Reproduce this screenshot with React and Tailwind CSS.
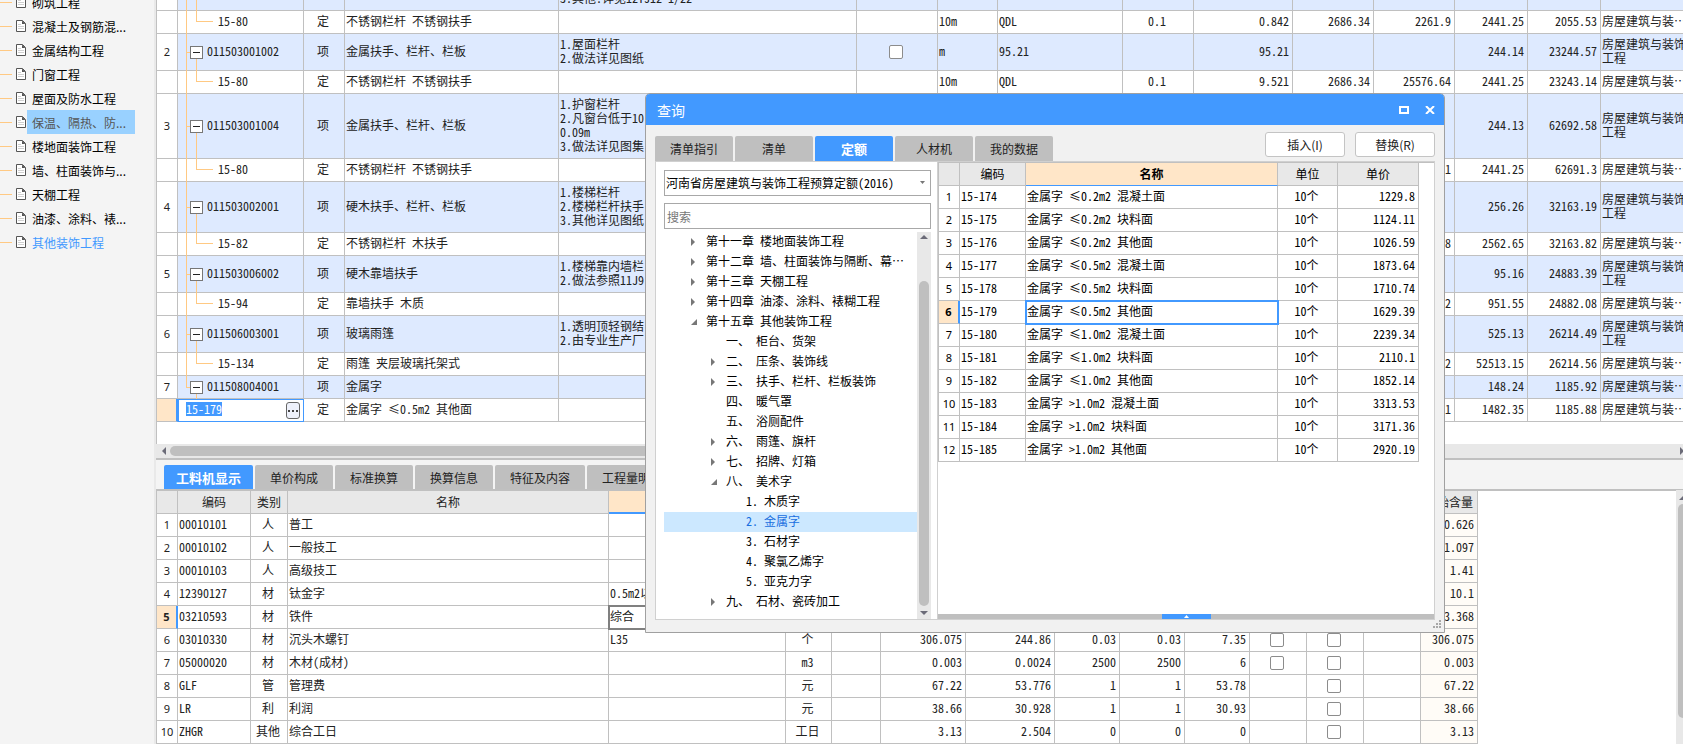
import { useEffect, useRef, useState } from 'react';

const SIDEBAR_ITEMS = [
  '砌筑工程',
  '混凝土及钢筋混...',
  '金属结构工程',
  '门窗工程',
  '屋面及防水工程',
  '保温、隔热、防...',
  '楼地面装饰工程',
  '墙、柱面装饰与...',
  '天棚工程',
  '油漆、涂料、裱...',
  '其他装饰工程',
];

const MAJOR = '房屋建筑与装饰工程';
const MAJOR_SHORT = '房屋建筑与装…';

const BILL_COLUMNS = [21, 126, 41, 214, 298, 81, 60, 125, 71, 99, 81, 81, 73, 73, 90];

const BILL_ROWS = [
  { child: true, code: '15-80', name: '不锈钢栏杆 不锈钢扶手', unit: '10m', expr: 'QDL', content: '0.1', qty: '0.842', base: '2686.34', baseTotal: '2261.9', price: '2441.25', total: '2055.53' },
  { no: '2', code: '011503001002', name: '金属扶手、栏杆、栏板', features: ['1.屋面栏杆', '2.做法详见图纸'], height: 'h-[37px]', check: true, unit: 'm', expr: '95.21', qty: '95.21', price: '244.14', total: '23244.57' },
  { child: true, code: '15-80', name: '不锈钢栏杆 不锈钢扶手', unit: '10m', expr: 'QDL', content: '0.1', qty: '9.521', base: '2686.34', baseTotal: '25576.64', price: '2441.25', total: '23243.14' },
  { no: '3', code: '011503001004', name: '金属扶手、栏杆、栏板', features: ['1.护窗栏杆', '2.凡窗台低于10', '0.09m', '3.做法详见图集'], height: 'h-[65px]', price: '244.13', total: '62692.58' },
  { child: true, code: '15-80', name: '不锈钢栏杆 不锈钢扶手', baseTotal: '1', price: '2441.25', total: '62691.3' },
  { no: '4', code: '011503002001', name: '硬木扶手、栏杆、栏板', features: ['1.楼梯栏杆', '2.楼梯栏杆扶手', '3.其他详见图纸'], height: 'h-[51px]', price: '256.26', total: '32163.19' },
  { child: true, code: '15-82', name: '不锈钢栏杆 木扶手', baseTotal: '8', price: '2562.65', total: '32163.82' },
  { no: '5', code: '011503006002', name: '硬木靠墙扶手', features: ['1.楼梯靠内墙栏', '2.做法参照11J9'], height: 'h-[37px]', price: '95.16', total: '24883.39' },
  { child: true, code: '15-94', name: '靠墙扶手 木质', baseTotal: '2', price: '951.55', total: '24882.08' },
  { no: '6', code: '011506003001', name: '玻璃雨篷', features: ['1.透明顶轻钢结', '2.由专业生产厂'], height: 'h-[37px]', price: '525.13', total: '26214.49' },
  { child: true, code: '15-134', name: '雨篷 夹层玻璃托架式', baseTotal: '2', price: '52513.15', total: '26214.56' },
  { no: '7', code: '011508004001', name: '金属字', last: true, price: '148.24', total: '1185.92' },
];

const DETAIL_TABS = ['工料机显示', '单价构成', '标准换算', '换算信息', '特征及内容', '工程量明细'];

const DETAIL_COLUMNS = [21, 73, 37, 321, 177, 46, 49, 85, 89, 65, 65, 65, 57, 57, 57, 57];

const DETAIL_ROWS = [
  { code: '00010101', type: '人', name: '普工', values: ['', '', '', '', ''], origin: '0.626' },
  { code: '00010102', type: '人', name: '一般技工', values: ['', '', '', '', ''], origin: '1.097' },
  { code: '00010103', type: '人', name: '高级技工', values: ['', '', '', '', ''], origin: '1.41' },
  { code: '12390127', type: '材', name: '钛金字', spec: '0.5m2以', values: ['', '', '', '', ''], origin: '10.1' },
  { code: '03210593', type: '材', name: '铁件', spec: '综合', values: ['', '', '', '', ''], origin: '3.368', active: true },
  { code: '03010330', type: '材', name: '沉头木螺钉', spec: 'L35', unit: '个', values: ['306.075', '244.86', '0.03', '0.03', '7.35'], temp: true, lock: true, origin: '306.075' },
  { code: '05000020', type: '材', name: '木材(成材)', unit: 'm3', values: ['0.003', '0.0024', '2500', '2500', '6'], temp: true, lock: true, origin: '0.003' },
  { code: 'GLF', type: '管', name: '管理费', unit: '元', values: ['67.22', '53.776', '1', '1', '53.78'], lock: true, origin: '67.22' },
  { code: 'LR', type: '利', name: '利润', unit: '元', values: ['38.66', '30.928', '1', '1', '30.93'], lock: true, origin: '38.66' },
  { code: 'ZHGR', type: '其他', name: '综合工日', unit: '工日', values: ['3.13', '2.504', '0', '0', '0'], lock: true, origin: '3.13' },
];

const QUERY_TABS = ['清单指引', '清单', '定额', '人材机', '我的数据'];

const CHAPTERS = [
  { level: 1, label: '第十一章 楼地面装饰工程', state: 'closed' },
  { level: 1, label: '第十二章 墙、柱面装饰与隔断、幕…', state: 'closed' },
  { level: 1, label: '第十三章 天棚工程', state: 'closed' },
  { level: 1, label: '第十四章 油漆、涂料、裱糊工程', state: 'closed' },
  { level: 1, label: '第十五章 其他装饰工程', state: 'open' },
  { level: 2, label: '一、 柜台、货架' },
  { level: 2, label: '二、 压条、装饰线', state: 'closed' },
  { level: 2, label: '三、 扶手、栏杆、栏板装饰', state: 'closed' },
  { level: 2, label: '四、 暖气罩' },
  { level: 2, label: '五、 浴厕配件' },
  { level: 2, label: '六、 雨篷、旗杆', state: 'closed' },
  { level: 2, label: '七、 招牌、灯箱', state: 'closed' },
  { level: 2, label: '八、 美术字', state: 'open' },
  { level: 3, label: '1. 木质字' },
  { level: 3, label: '2. 金属字' },
  { level: 3, label: '3. 石材字' },
  { level: 3, label: '4. 聚氯乙烯字' },
  { level: 3, label: '5. 亚克力字' },
  { level: 2, label: '九、 石材、瓷砖加工', state: 'closed' },
];

const LEVEL_INDENT = { 1: 'pl-[26px]', 2: 'pl-[46px]', 3: 'pl-[66px]' };

const QUOTA_COLUMNS = [21, 66, 252, 60, 81];

const QUOTAS = [
  ['15-174', '金属字 ≤0.2m2 混凝土面', '1229.8'],
  ['15-175', '金属字 ≤0.2m2 块料面', '1124.11'],
  ['15-176', '金属字 ≤0.2m2 其他面', '1026.59'],
  ['15-177', '金属字 ≤0.5m2 混凝土面', '1873.64'],
  ['15-178', '金属字 ≤0.5m2 块料面', '1710.74'],
  ['15-179', '金属字 ≤0.5m2 其他面', '1629.39'],
  ['15-180', '金属字 ≤1.0m2 混凝土面', '2239.34'],
  ['15-181', '金属字 ≤1.0m2 块料面', '2110.1'],
  ['15-182', '金属字 ≤1.0m2 其他面', '1852.14'],
  ['15-183', '金属字 >1.0m2 混凝土面', '3313.53'],
  ['15-184', '金属字 >1.0m2 块料面', '3171.36'],
  ['15-185', '金属字 >1.0m2 其他面', '2920.19'],
];

function Columns({ widths }) {
  return (
    <colgroup>
      {widths.map((w, i) => (
        <col key={i} style={{ width: w }} />
      ))}
    </colgroup>
  );
}

function Cell({ className = 'pb-0.5', children }) {
  return (
    <td className={`overflow-hidden border-r border-b border-[#c0c0c0] pr-[3px] pl-px whitespace-nowrap ${className}`}>
      {children}
    </td>
  );
}

function HeadCell({ className = 'border-b-[#c0c0c0] bg-[#e8e8e8] font-normal', children }) {
  return (
    <th className={`h-[23px] border-r border-b border-r-[#c0c0c0] p-0 whitespace-nowrap ${className}`}>
      {children}
    </th>
  );
}

function IndexCell({ active, children }) {
  return (
    <td
      className={`border-b border-b-[#c0c0c0] p-0 text-center font-['Noto_Sans',sans-serif] text-[11px] ${
        active ? 'border-r-2 border-r-[#4299ff] bg-[#ffe6c8] font-bold' : 'border-r border-r-[#c0c0c0]'
      }`}
    >
      {children}
    </td>
  );
}

function CheckBox({ label }) {
  return (
    <input
      type="checkbox"
      aria-label={label}
      className="mx-auto block size-3.5 appearance-none rounded-xs border border-[#8c8c8c] bg-white checked:bg-[#4299ff]"
    />
  );
}

function Triangle({ dir, className = '' }) {
  const paths = {
    up: 'M0 6 L4 2 L8 6 Z',
    down: 'M0 2 L4 6 L8 2 Z',
    left: 'M6 0 L2 4 L6 8 Z',
    right: 'M1 0 L5 4 L1 8 Z',
    corner: 'M7 1 L7 7 L1 7 Z',
  };
  return (
    <svg viewBox="0 0 8 8" className={`size-2 shrink-0 ${className}`} fill="currentColor" aria-hidden="true">
      <path d={paths[dir]} />
    </svg>
  );
}

function DocIcon() {
  return (
    <svg width="10" height="12" viewBox="0 0 10 12" fill="none" className="shrink-0" aria-hidden="true">
      <path d="M0.5 0.5H6.5L9.5 3.5V11.5H0.5Z" fill="#fff" stroke="#555" />
      <path d="M6 0.5L9.5 4H6Z" fill="#555" />
      <path d="M2 4.5H5M2 6.5H8M2 8.5H8" stroke="#d0d0d0" />
    </svg>
  );
}

function Sidebar() {
  return (
    <nav className="w-[156px] shrink-0 overflow-hidden border-r-2 border-[#e9e9e9] bg-[#f4f4f4] font-['Noto_Sans_CJK_SC',sans-serif]">
      <ul className="-mt-2.5">
        {SIDEBAR_ITEMS.map((item, i) => (
          <li key={item} className="flex h-6 items-center">
            <span className="mr-1 h-px w-3 bg-[#ffc983]" />
            <DocIcon />
            <a
              href="#"
              className={`ml-px h-6 pt-0.5 pl-[5px] leading-[22px] ${i === 5 ? 'w-[108px] bg-[#99d1ff] text-[#555]' : ''} ${
                i === 10 ? 'text-[#4299ff]' : ''
              }`}
            >
              {item}
            </a>
          </li>
        ))}
      </ul>
    </nav>
  );
}

// Code column of the bill table, with the tree lines drawn over the cell
function CodeCell({ row }) {
  return (
    <td className="relative border-r border-b border-[#c0c0c0] p-0">
      <span className={`absolute top-0 left-2 w-px bg-[#ffc983] ${row.last ? 'h-1/2' : '-bottom-px'}`} />
      {row.child ? (
        <>
          <span className="absolute top-0 left-[18px] h-1/2 w-[17px] border-b border-l border-[#ffc983]" />
          <div className="pb-0.5 pl-10">{row.code}</div>
        </>
      ) : (
        <>
          <span className="absolute top-1/2 left-2 h-px w-1 bg-[#ffc983]" />
          <span className="absolute top-1/2 left-[18px] -bottom-px w-px bg-[#ffc983]" />
          <div className="relative flex items-center gap-1 pl-3">
            <button
              type="button"
              aria-label="折叠"
              className="flex size-[13px] items-center justify-center border border-[#777] bg-white"
            >
              <span className="h-px w-[7px] bg-[#222]" />
            </button>
            <span className="pb-0.5">{row.code}</span>
          </div>
        </>
      )}
    </td>
  );
}

function EditCell() {
  const inputRef = useRef(null);

  useEffect(() => {
    inputRef.current.focus();
    inputRef.current.select();
  }, []);

  return (
    <td className="border border-[#4299ff] p-0">
      <div className="flex items-center pr-[3px] pl-[7px]">
        <input
          ref={inputRef}
          aria-label="编码"
          defaultValue="15-179"
          className="mb-1 h-3.5 min-w-0 flex-1 text-[12px] leading-[14px] outline-none selection:bg-[#4299ff] selection:text-white"
        />
        <button
          type="button"
          aria-label="选择"
          className="flex h-[17px] w-3.5 items-center justify-center gap-0.5 rounded-[3px] border border-[#666] bg-[#eef1fb]"
        >
          <span className="size-0.5 bg-[#444]" />
          <span className="size-0.5 bg-[#444]" />
          <span className="size-0.5 bg-[#444]" />
        </button>
      </div>
    </td>
  );
}

function BillRow({ row }) {
  return (
    <tr className={`${row.height || 'h-[23px]'} ${row.child ? '' : 'bg-[#deeaff]'}`}>
      <td className="border-r border-b border-[#c0c0c0] bg-white p-0 text-center font-['Noto_Sans',sans-serif] text-[11px]">
        {row.no}
      </td>
      <CodeCell row={row} />
      <Cell className="pb-0.5 text-center">{row.child ? '定' : '项'}</Cell>
      <Cell>{row.name}</Cell>
      <Cell>
        {row.features?.map((line) => (
          <div key={line}>{line}</div>
        ))}
      </Cell>
      <Cell className="pb-0">{row.check && <CheckBox label="主要清单" />}</Cell>
      <Cell>{row.unit}</Cell>
      <Cell>{row.expr}</Cell>
      <Cell className="pb-0.5 text-center">{row.content}</Cell>
      <Cell className="pb-0.5 text-right">{row.qty}</Cell>
      <Cell className="pb-0.5 text-right">{row.base}</Cell>
      <Cell className="pb-0.5 text-right">{row.baseTotal}</Cell>
      <Cell className="pb-0.5 text-right">{row.price}</Cell>
      <Cell className="pb-0.5 text-right">{row.total}</Cell>
      <Cell>{row.features ? <div className="w-[84px] whitespace-normal">{MAJOR}</div> : MAJOR_SHORT}</Cell>
    </tr>
  );
}

function BillTable() {
  return (
    <div className="overflow-hidden border-l border-[#c0c0c0] bg-white pb-[22px]">
      <table className="w-[1534px] table-fixed border-separate border-spacing-0 text-[#222]">
        <Columns widths={BILL_COLUMNS} />
        <tbody>
          <tr className="bg-[#deeaff]">
            <td className="h-[11px] border-r border-b border-[#c0c0c0] bg-white p-0" />
            <td className="relative border-r border-b border-[#c0c0c0] p-0">
              <span className="absolute top-0 -bottom-px left-2 w-px bg-[#ffc983]" />
              <span className="absolute top-0 -bottom-px left-[18px] w-px bg-[#ffc983]" />
            </td>
            <Cell className="py-0" />
            <Cell className="py-0" />
            <Cell className="py-0">
              <div className="flex h-2.5 items-end overflow-hidden pb-[5px]">3.其他:详见12YJ12 1/22</div>
            </Cell>
            {BILL_COLUMNS.slice(5).map((_, i) => (
              <Cell key={i} className="py-0" />
            ))}
          </tr>
          {BILL_ROWS.map((row, i) => (
            <BillRow key={i} row={row} />
          ))}
          <tr className="h-[23px]">
            <td className="border-r-2 border-b border-r-[#4299ff] border-b-[#c0c0c0] bg-[#ffe6c8]" />
            <EditCell />
            <Cell className="pb-0.5 text-center">定</Cell>
            <Cell>金属字 ≤0.5m2 其他面</Cell>
            <Cell />
            <Cell />
            <Cell />
            <Cell />
            <Cell />
            <Cell />
            <Cell />
            <Cell className="pb-0.5 text-right">1</Cell>
            <Cell className="pb-0.5 text-right">1482.35</Cell>
            <Cell className="pb-0.5 text-right">1185.88</Cell>
            <Cell>{MAJOR_SHORT}</Cell>
          </tr>
        </tbody>
      </table>
    </div>
  );
}

function DetailTable() {
  return (
    <div className="border-t border-l border-[#c0c0c0]">
      <table className="w-[1321px] table-fixed border-separate border-spacing-0 text-[#222]">
        <Columns widths={DETAIL_COLUMNS} />
        <thead>
          <tr>
            <HeadCell />
            <HeadCell>编码</HeadCell>
            <HeadCell>类别</HeadCell>
            <HeadCell>名称</HeadCell>
            <HeadCell className="border-b-[#4299ff] bg-[#ffe6c8] shadow-[inset_0_-1px_0_#4299ff]" />
            {DETAIL_COLUMNS.slice(6).map((_, i) => (
              <HeadCell key={i} />
            ))}
            <HeadCell>原始含量</HeadCell>
          </tr>
        </thead>
        <tbody>
          {DETAIL_ROWS.map((row, i) => (
            <tr key={row.code} className="h-[23px]">
              <IndexCell active={row.active}>{i + 1}</IndexCell>
              <Cell>{row.code}</Cell>
              <Cell className="pb-0.5 text-center">{row.type}</Cell>
              <Cell>{row.name}</Cell>
              <Cell className={row.active ? 'pb-0.5 outline-2 -outline-offset-1 outline-[#808080]' : 'pb-0.5'}>
                {row.spec}
              </Cell>
              <Cell className="pb-0.5 text-center">{row.unit}</Cell>
              <Cell />
              {row.values.map((value, j) => (
                <Cell key={j} className="pb-0.5 text-right">{value}</Cell>
              ))}
              <Cell className="pb-0">{row.temp && <CheckBox label="是否暂估" />}</Cell>
              <Cell className="pb-0">{row.lock && <CheckBox label="锁定数量" />}</Cell>
              <Cell />
              <Cell className="bg-[#fffcf7] pb-0.5 text-right">{row.origin}</Cell>
            </tr>
          ))}
        </tbody>
      </table>
    </div>
  );
}

function DetailPane() {
  const [tab, setTab] = useState(0);

  return (
    <section className="flex min-h-0 flex-1 flex-col border-t-2 border-[#c0c0c0] bg-[#f4f4f4]">
      <div className="flex shrink-0 gap-0.5 overflow-hidden pt-[5px] pl-2">
        {DETAIL_TABS.map((label, i) => (
          <button
            key={label}
            type="button"
            onClick={() => setTab(i)}
            className={`h-6 shrink-0 rounded-t-xs pt-0.5 ${
              i === tab
                ? 'bg-[#4299ff] px-3 text-[13px] font-bold text-white'
                : 'bg-[#bfbfbf] px-[15px] text-[#222]'
            }`}
          >
            {label}
          </button>
        ))}
      </div>
      <div className="flex min-h-0 flex-1 border-t border-[#c0c0c0] bg-white">
        <div className="min-w-0 flex-1 overflow-hidden">
          <DetailTable />
        </div>
        <div className="flex w-[7px] shrink-0 flex-col overflow-hidden bg-[#e8e8e8] pl-0.5">
          <Triangle dir="up" className="mt-1 ml-px text-[#6b6b78]" />
          <span className="mt-0.5 h-[214px] w-2.5 rounded-full bg-[#bfbfbf]" />
        </div>
      </div>
    </section>
  );
}

function ChapterTree() {
  const [selected, setSelected] = useState(14);

  return (
    <div className="mt-[3px] flex min-h-0 flex-1">
      <ul className="min-w-0 flex-1 overflow-hidden">
        {CHAPTERS.map((node, i) => (
          <li key={node.label}>
            <button
              type="button"
              onClick={() => setSelected(i)}
              className={`flex h-5 w-full items-center gap-2 text-left whitespace-nowrap ${LEVEL_INDENT[node.level]} ${
                i === selected ? 'bg-[#cce8ff] text-[#1a6fe0]' : 'text-black'
              }`}
            >
              <span className="w-2 shrink-0">
                {node.state && (
                  <Triangle dir={node.state === 'open' ? 'corner' : 'right'} className="text-[#777]" />
                )}
              </span>
              <span className="pb-0.5">{node.label}</span>
            </button>
          </li>
        ))}
      </ul>
      <div className="flex w-3.5 shrink-0 flex-col items-center bg-[#e8e8e8] pb-0.5">
        <Triangle dir="up" className="mt-px text-[#6b6b78]" />
        <span className="mt-10 mb-[3px] w-2.5 flex-1 rounded-full bg-[#bfbfbf]" />
        <Triangle dir="down" className="text-[#6b6b78]" />
      </div>
    </div>
  );
}

function QuotaTable() {
  return (
    <div className="border-t border-l border-[#c0c0c0]">
      <table className="w-[480px] table-fixed border-separate border-spacing-0 text-black">
        <Columns widths={QUOTA_COLUMNS} />
        <thead>
          <tr>
            <HeadCell />
            <HeadCell>编码</HeadCell>
            <HeadCell className="border-b-[#4299ff] bg-[#ffe6c8] font-bold">名称</HeadCell>
            <HeadCell>单位</HeadCell>
            <HeadCell>单价</HeadCell>
          </tr>
        </thead>
        <tbody>
          {QUOTAS.map(([code, name, price], i) => (
            <tr key={code} className="h-[23px]">
              <IndexCell active={i === 5}>{i + 1}</IndexCell>
              <Cell className="pb-0.5">{code}</Cell>
              <Cell className={i === 5 ? 'pb-0.5 outline-2 -outline-offset-1 outline-[#4299ff]' : 'pb-0.5'}>
                {name}
              </Cell>
              <Cell className="pb-0.5 text-center">10个</Cell>
              <Cell className="pb-0.5 text-right">{price}</Cell>
            </tr>
          ))}
        </tbody>
      </table>
    </div>
  );
}

function QueryDialog() {
  const [tab, setTab] = useState(2);

  return (
    <div
      role="dialog"
      aria-label="查询"
      className="absolute top-[93px] left-[645px] flex h-[540px] w-[800px] flex-col overflow-hidden rounded-t-[5px] border border-[#a0a0a0] bg-[#f1f1f1]"
    >
      <div className="flex h-[31px] shrink-0 items-center justify-between bg-[#4299ff] pr-[9px] pl-[11px] text-white">
        <h2 className="font-['Noto_Sans_CJK_SC',sans-serif] text-[14px]">查询</h2>
        <div className="flex items-center gap-4">
          <button type="button" aria-label="最大化">
            <svg width="10" height="8" viewBox="0 0 10 8" fill="none" stroke="currentColor" strokeWidth="2">
              <rect x="1" y="1" width="8" height="6" />
            </svg>
          </button>
          <button type="button" aria-label="关闭">
            <svg width="10" height="8" viewBox="0 0 10 8" fill="none" stroke="currentColor" strokeWidth="2">
              <path d="M1 0L9 8M9 0L1 8" />
            </svg>
          </button>
        </div>
      </div>

      <div className="flex shrink-0 items-end justify-between px-[9px] pt-[7px]">
        <div className="flex gap-0.5">
          {QUERY_TABS.map((label, i) => (
            <button
              key={label}
              type="button"
              onClick={() => setTab(i)}
              className={`h-[25px] w-[78px] rounded-t-xs ${
                i === tab ? 'bg-[#4299ff] text-[13px] font-bold text-white' : 'bg-[#bfbfbf] text-[#222]'
              }`}
            >
              {label}
            </button>
          ))}
        </div>
        <div className="mb-1 flex gap-2.5 font-['Noto_Sans_CJK_SC',sans-serif] text-[#222]">
          <button type="button" className="h-[25px] w-20 rounded-[3px] border border-[#c4c4c4] bg-white">
            插入(I)
          </button>
          <button type="button" className="h-[25px] w-20 rounded-[3px] border border-[#c4c4c4] bg-white">
            替换(R)
          </button>
        </div>
      </div>

      <div className="mx-[9px] mb-3 flex min-h-0 flex-1 border border-[#d0d0d0] bg-white">
        <div className="flex w-[275px] shrink-0 flex-col pt-2 pl-2">
          <div className="relative shrink-0">
            <select
              aria-label="定额库"
              className="block h-[26px] w-full appearance-none border border-[#a8a8a8] bg-white px-px text-black"
            >
              <option>河南省房屋建筑与装饰工程预算定额(2016)</option>
            </select>
            <svg
              width="5"
              height="3"
              viewBox="0 0 5 3"
              fill="#777"
              className="pointer-events-none absolute top-[11px] right-1.5"
              aria-hidden="true"
            >
              <path d="M0 0H5L2.5 3Z" />
            </svg>
          </div>
          <input
            type="text"
            aria-label="搜索"
            placeholder="搜索"
            className="mt-[7px] block h-[26px] w-full shrink-0 border border-[#a8a8a8] bg-white px-0.5 outline-none placeholder:text-[#777]"
          />
          <ChapterTree />
        </div>
        <div className="ml-1.5 flex min-w-0 flex-1 flex-col border-l border-[#d0d0d0]">
          <div className="min-h-0 flex-1">
            <QuotaTable />
          </div>
          <div className="flex h-[5px] shrink-0 justify-center bg-[#bfbfbf]">
            <button
              type="button"
              aria-label="展开"
              className="flex w-[49px] items-center justify-center bg-[#4299ff] text-white"
            >
              <svg width="5" height="3" viewBox="0 0 5 3" fill="currentColor">
                <path d="M0 3L2.5 0L5 3Z" />
              </svg>
            </button>
          </div>
        </div>
      </div>

      {/* Resize grip */}
      <svg
        width="8"
        height="8"
        viewBox="0 0 8 8"
        fill="#a8a8a8"
        className="absolute right-[3px] bottom-1"
        aria-hidden="true"
      >
        <path d="M6 0h2v2H6zM3 3h2v2H3zM6 3h2v2H6zM0 6h2v2H0zM3 6h2v2H3zM6 6h2v2H6z" />
      </svg>
    </div>
  );
}

export default function App() {
  return (
    <div className="relative flex h-screen overflow-hidden bg-white font-['Noto_Sans_Mono_CJK_SC','Noto_Sans_CJK_SC',monospace] text-[12px] leading-[14px] text-black">
      <Sidebar />
      <main className="flex min-w-0 flex-1 flex-col">
        <BillTable />
        <div className="flex h-3.5 shrink-0 items-center bg-[#e8e8e8] pl-1">
          <Triangle dir="left" className="text-[#6b6b78]" />
          <span className="ml-0.5 h-2.5 w-3/4 rounded-full bg-[#bfbfbf]" />
          <Triangle dir="right" className="-mr-1 ml-auto text-[#6b6b78]" />
        </div>
        <DetailPane />
      </main>
      <QueryDialog />
    </div>
  );
}
